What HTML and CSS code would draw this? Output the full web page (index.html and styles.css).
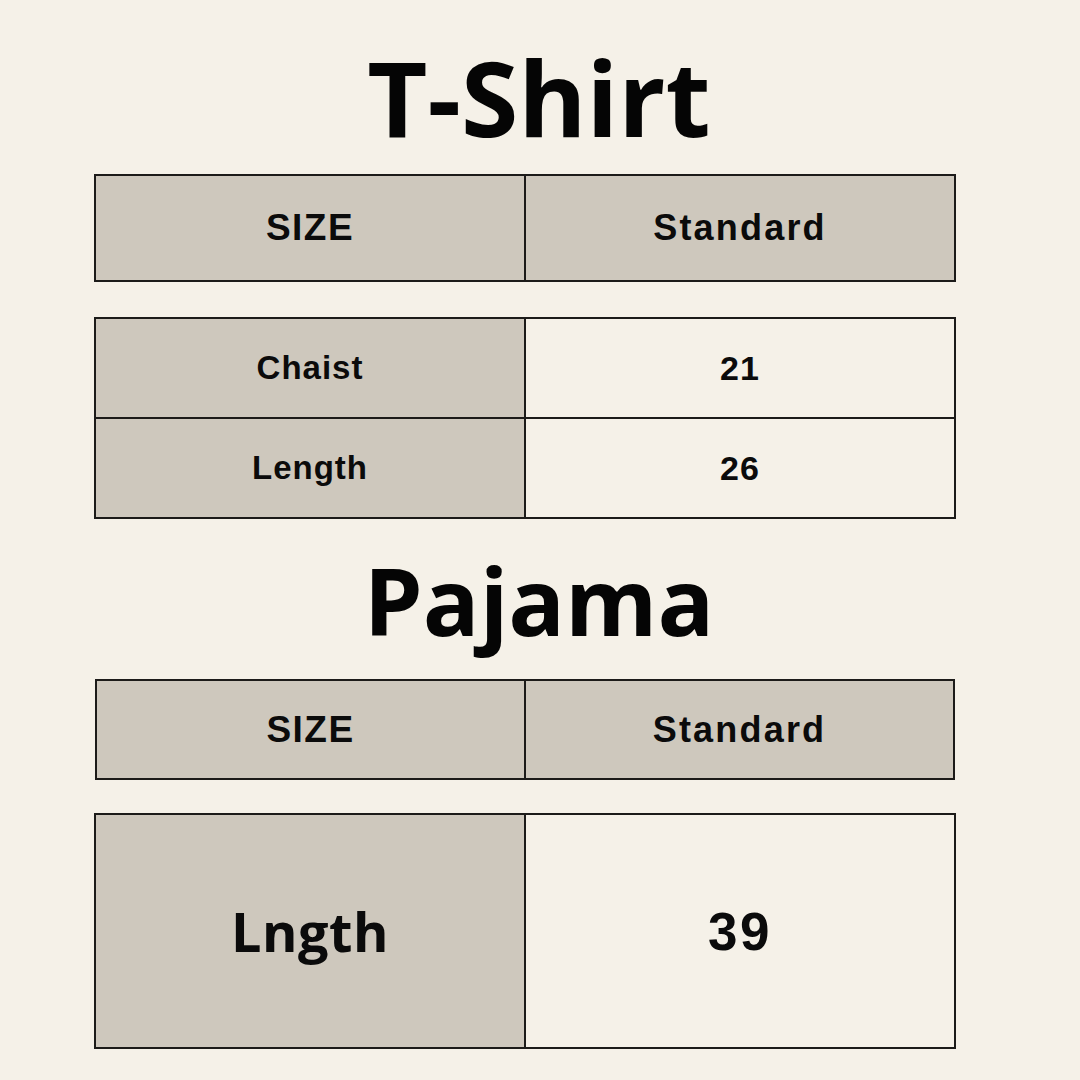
FILE: index.html
```html
<!DOCTYPE html>
<html lang="en">
<head>
<meta charset="utf-8">
<title>Size Chart</title>
<link rel="stylesheet" href="styles.css">
</head>
<body>
<main class="page">
  <h1 class="title title-shirt">T-Shirt</h1>
  <div class="table table-head">
    <div class="cell shade head-cell size-label">SIZE</div>
    <div class="cell shade head-cell std-label">Standard</div>
  </div>
  <div class="table table-body">
    <div class="cell shade row-cell">Chaist</div>
    <div class="cell row-cell num">21</div>
    <div class="cell shade row-cell top">Length</div>
    <div class="cell row-cell num top">26</div>
  </div>
  <h1 class="title title-pajama">Pajama</h1>
  <div class="table table-head2">
    <div class="cell shade head-cell size-label">SIZE</div>
    <div class="cell shade head-cell std-label">Standard</div>
  </div>
  <div class="table table-big">
    <div class="cell shade big-label">Lngth</div>
    <div class="cell big-num">39</div>
  </div>
</main>
</body>
</html>
```

FILE: styles.css
```css
html, body {
  margin: 0;
  padding: 0;
  background: #f5f1e8;
}

.page {
  width: 1080px;
  height: 1080px;
  box-sizing: border-box;
  padding: 45px 0 0 94px;
  display: flex;
  flex-direction: column;
  color: #0b0b0b;
  font-family: "Liberation Sans", Arial, sans-serif;
}

.title {
  margin: 0;
  font-family: "Open Sans", "Liberation Sans", sans-serif;
  font-weight: 700;
  text-align: center;
  width: 862px;
  box-sizing: border-box;
  padding-left: 28px;
  line-height: 1;
  letter-spacing: 0;
  color: #050505;
}

.title-shirt {
  font-size: 104px;
  height: 104px;
  margin-bottom: 25px;
}

.title-pajama {
  font-size: 94px;
  height: 94px;
  margin-top: 34px;
  margin-bottom: 32px;
}

.table {
  width: 862px;
  box-sizing: border-box;
  border: 2px solid #1c1b19;
  display: grid;
  grid-template-columns: 430px 1fr;
}

.table-head {
  height: 108px;
}

.table-body {
  height: 202px;
  margin-top: 35px;
  grid-template-rows: 98px 100px;
}

.table-head2 {
  width: 860px;
  margin-left: 1px;
  height: 101px;
  grid-template-columns: 429px 1fr;
}

.table-big {
  height: 236px;
  margin-top: 33px;
}

.cell {
  display: flex;
  align-items: center;
  justify-content: center;
  font-weight: 700;
}

.cell:nth-child(odd) {
  border-right: 2px solid #1c1b19;
}

.cell.top {
  border-top: 2px solid #1c1b19;
}

.shade {
  background: #cec8bd;
}

.head-cell {
  font-size: 37px;
  letter-spacing: 1.5px;
}

.std-label {
  font-size: 36px;
  letter-spacing: 2.2px;
}

.row-cell {
  font-size: 33px;
  letter-spacing: 1px;
}

.num {
  font-size: 34px;
  letter-spacing: 1px;
}

.big-label {
  font-family: "Open Sans", "Liberation Sans", sans-serif;
  font-size: 54px;
  letter-spacing: 0.5px;
}

.big-num {
  font-size: 53px;
  letter-spacing: 2.5px;
}
```
